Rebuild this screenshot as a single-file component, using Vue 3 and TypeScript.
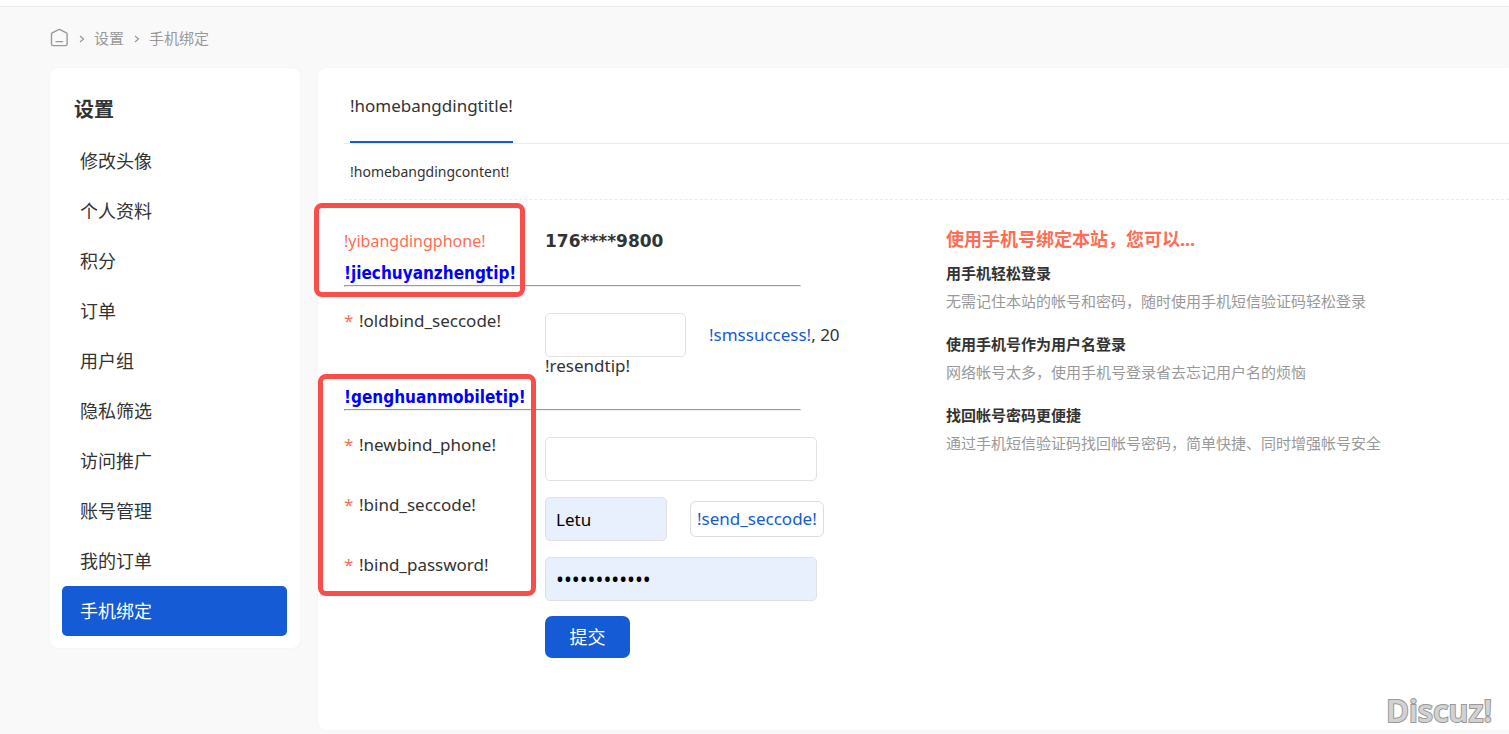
<script setup lang="ts">
import { ref } from 'vue'

interface Benefit {
  title: string
  text: string
}

const menu: string[] = [
  '修改头像', '个人资料', '积分', '订单', '用户组',
  '隐私筛选', '访问推广', '账号管理', '我的订单', '手机绑定',
]
const active = ref('手机绑定')

const benefits: Benefit[] = [
  { title: '用手机轻松登录', text: '无需记住本站的帐号和密码，随时使用手机短信验证码轻松登录' },
  { title: '使用手机号作为用户名登录', text: '网络帐号太多，使用手机号登录省去忘记用户名的烦恼' },
  { title: '找回帐号密码更便捷', text: '通过手机短信验证码找回帐号密码，简单快捷、同时增强帐号安全' },
]

const oldCode = ref('')
const newPhone = ref('')
const code = ref('Letu')
const password = ref('abcdefghijkl')
const seconds = ref(20)
</script>

<template>
  <div class="page">
    <header class="topbar"></header>

    <nav class="crumbs" aria-label="breadcrumb">
      <a href="#" class="home" aria-label="home">
        <svg width="20" height="20" viewBox="0 0 20 20" fill="none" stroke="#999" stroke-width="1.4" stroke-linejoin="round" stroke-linecap="round">
          <path d="M2.5 6 Q2.5 5.2 3.2 4.8 L9.6 1.6 Q10.3 1.3 11 1.6 L17.4 4.8 Q18.1 5.2 18.1 6 V16 Q18.1 17.6 16.5 17.6 H4.1 Q2.5 17.6 2.5 16 Z" />
          <path d="M7 13.6 H13.6" />
        </svg>
      </a>
      <svg class="sep" width="6" height="8" viewBox="0 0 6 8" fill="none" stroke="#999" stroke-width="1.2"><path d="M1 1 L4.5 4 L1 7" /></svg>
      <a href="#">设置</a>
      <svg class="sep" width="6" height="8" viewBox="0 0 6 8" fill="none" stroke="#999" stroke-width="1.2"><path d="M1 1 L4.5 4 L1 7" /></svg>
      <a href="#">手机绑定</a>
    </nav>

    <div class="columns">
      <aside class="sidebar">
        <h2>设置</h2>
        <ul>
          <li v-for="item in menu" :key="item">
            <a href="#" :class="{ active: item === active }" @click.prevent="active = item">{{ item }}</a>
          </li>
        </ul>
      </aside>

      <main class="panel">
        <div class="tabs"><a href="#" class="tab">!homebangdingtitle!</a></div>
        <p class="intro">!homebangdingcontent!</p>

        <div class="body">
          <form class="form" @submit.prevent>
            <section class="group">
              <div class="row bound">
                <span class="warn">!yibangdingphone!</span>
                <strong>176****9800</strong>
              </div>
              <h3>!jiechuyanzhengtip!</h3>
              <hr />
              <div class="mark mark-first"></div>
            </section>

            <div class="row">
              <label for="old-code"><i>*</i>!oldbind_seccode!</label>
              <div>
                <div class="inline">
                  <input id="old-code" v-model="oldCode" class="old" type="text" />
                  <span><a href="#">!smssuccess!</a>, {{ seconds }}</span>
                </div>
                <div class="resend">!resendtip!</div>
              </div>
            </div>

            <section class="group second">
              <h3>!genghuanmobiletip!</h3>
              <hr />
              <div class="fields">
                <div class="row">
                  <label for="phone"><i>*</i>!newbind_phone!</label>
                  <input id="phone" v-model="newPhone" class="wide" type="text" />
                </div>
                <div class="row">
                  <label for="code"><i>*</i>!bind_seccode!</label>
                  <div class="inline">
                    <input id="code" v-model="code" class="short filled" type="text" />
                    <button type="button" class="send">!send_seccode!</button>
                  </div>
                </div>
                <div class="row">
                  <label for="password"><i>*</i>!bind_password!</label>
                  <input id="password" v-model="password" class="wide filled secret" type="password" />
                </div>
              </div>
              <div class="mark mark-second"></div>
            </section>

            <div class="row"><span></span><button type="submit" class="submit">提交</button></div>
          </form>

          <section class="benefits">
            <h4>使用手机号绑定本站，您可以...</h4>
            <dl>
              <template v-for="b in benefits" :key="b.title">
                <dt>{{ b.title }}</dt>
                <dd>{{ b.text }}</dd>
              </template>
            </dl>
          </section>
        </div>
      </main>
    </div>

    <div class="brand">Discuz!</div>
  </div>
</template>

<style>
body {
  margin: 0;
  background: #f9f9f9;
}
</style>

<style scoped>
.page {
  position: relative;
  min-height: 100vh;
  color: #333;
  font: 17px/20px Tahoma, "Noto Sans", "Noto Sans CJK SC", sans-serif;
}
.page, .page * { box-sizing: border-box; }
a { color: inherit; text-decoration: none; }
input, button { font: inherit; }
h2, h3, h4, p, ul, dl, dd { margin: 0; padding: 0; }

.topbar {
  height: 7px;
  background: #fff;
  border-bottom: 1px solid #ebebeb;
}
.crumbs {
  display: flex;
  align-items: center;
  height: 61px;
  padding-left: 49px;
  font-size: 15px;
  color: #999;
}
.home { display: flex; }
.sep { margin: 3px 9px 0 10px; }

.columns {
  display: flex;
  align-items: flex-start;
  gap: 18px;
  padding-left: 50px;
}
.sidebar {
  flex: 0 0 250px;
  padding: 16px 13px 12px 12px;
  background: #fff;
  border-radius: 8px;
  box-shadow: 0 0 2px rgba(0, 0, 0, 0.06);
}
.sidebar h2 {
  padding-left: 12px;
  font-size: 20px;
  line-height: 52px;
}
.sidebar ul { list-style: none; }
.sidebar li a {
  display: block;
  padding-left: 18px;
  border-radius: 5px;
  font-size: 18px;
  line-height: 50px;
}
.sidebar li a.active { color: #fff; background: #155bd5; }

.panel {
  flex: 1;
  min-width: 0;
  padding: 0 0 72px 26px;
  background: #fff;
  border-radius: 8px 0 0 8px;
  box-shadow: 0 0 2px rgba(0, 0, 0, 0.06);
}
.tabs {
  display: flex;
  padding-left: 6px;
  border-bottom: 1px solid #ebebeb;
}
.tab {
  height: 75px;
  border-bottom: 2px solid #155bd5;
  line-height: 76px;
}
.intro {
  padding-left: 6px;
  border-bottom: 1px dashed #ebebeb;
  font-size: 14px;
  line-height: 55px;
}
.body {
  display: flex;
  align-items: flex-start;
}
.form { flex: 0 0 602px; }
.row {
  display: grid;
  grid-template-columns: 201px 1fr;
  justify-items: start;
}
.group { position: relative; }
.bound { padding: 26px 0 5px; line-height: 30px; }
.bound strong { font-family: "DejaVu Sans", sans-serif; }
.warn, i { color: #ff6d55; }
.warn { font-size: 16px; }
i { display: inline-block; width: 15px; font-style: normal; }
h3 {
  color: #00f;
  font-family: "DejaVu Sans Condensed", "DejaVu Sans", sans-serif;
  font-size: 17px;
  line-height: 24px;
}
hr {
  width: 457px;
  margin: 0 0 26px;
}
label { line-height: 16px; }
.inline { display: flex; align-items: center; }
.resend { line-height: 18px; }
.form a, .send { color: #155bd5; }
input {
  height: 44px;
  padding: 0 10px;
  border: 1px solid #e1e1e1;
  border-radius: 5px;
  background: #fff;
  color: #000;
  outline: none;
}
.filled { background: #e8f0fe; }
.secret { font-size: 21px; }
.old { width: 141px; margin-right: 23px; }
.short { width: 122px; margin-right: 23px; }
.wide { width: 272px; }
.second { padding-top: 10px; }
.fields { display: grid; gap: 16px; }
.send {
  height: 36px;
  padding: 0 6px;
  border: 1px solid #ddd;
  border-radius: 6px;
  background: #fff;
}
.submit {
  width: 85px;
  height: 42px;
  margin-top: 15px;
  border: 0;
  border-radius: 7px;
  color: #fff;
  background: #155bd5;
  font-size: 18px;
}
.mark {
  position: absolute;
  border: 5px solid #f94d49;
  border-radius: 8px;
  pointer-events: none;
}
.mark-first { left: -30px; top: 3px; width: 211px; height: 94px; }
.mark-second { left: -26px; top: -1px; width: 218px; height: 222px; }

.benefits { padding-top: 24px; font-size: 15px; }
.benefits h4 {
  color: #ff6d55;
  font-size: 18px;
  line-height: 30px;
}
dt { font-weight: 700; line-height: 28px; padding-top: 5px; }
dd { color: #999; line-height: 28px; margin-bottom: 10px; }

.brand {
  position: absolute;
  right: 17px;
  bottom: 4px;
  color: #d2d2d2;
  font-size: 31px;
  font-weight: 600;
  line-height: 40px;
  -webkit-text-stroke: 2px #999;
  paint-order: stroke fill;
}
</style>
